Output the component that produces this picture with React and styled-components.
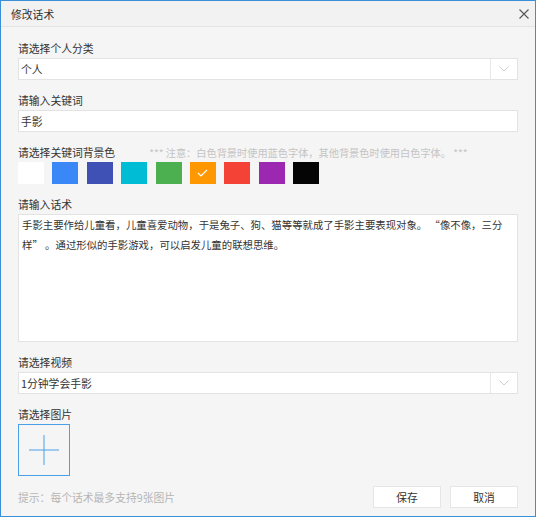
import React from 'react';
import styled, { createGlobalStyle } from 'styled-components';

const GlobalStyle = createGlobalStyle`
  html, body { margin: 0; padding: 0; }
  body {
    font-family: "Noto Sans CJK SC", "Microsoft YaHei", sans-serif;
    background: #ffffff;
  }
  *, *::before, *::after { box-sizing: border-box; }
`;

const Dialog = styled.div`
  width: 536px;
  height: 517px;
  border: 1px solid #3b8fd9;
  background: #f5f5f5;
  display: flex;
  flex-direction: column;
`;

const TitleBar = styled.div`
  height: 26px;
  flex: none;
  display: flex;
  align-items: center;
  justify-content: space-between;
  padding: 0 6px 0 10px;
  background: #f2f2f2;
  border-bottom: 1px solid #e4e4e4;
  font-size: 10.8px;
  color: #333;
`;

const CloseButton = styled.button`
  width: 10px;
  height: 10px;
  padding: 0;
  border: 0;
  background: none;
  display: flex;
  cursor: pointer;
`;

const Body = styled.div`
  flex: 1;
  display: flex;
  flex-direction: column;
  padding: 11px 17px 0;
`;

const Group = styled.div`
  margin-bottom: ${(p) => p.$gap ?? 10}px;
`;

const LabelRow = styled.div`
  height: 20px;
  display: flex;
  align-items: center;
`;

const Label = styled.span`
  font-size: 10.8px;
  line-height: 20px;
  color: #333;
`;

const Note = styled.span`
  margin-left: 34px;
  font-size: 10.2px;
  color: #c4c4c4;
`;

const SelectBox = styled.div`
  height: 22px;
  display: flex;
  background: #fff;
  border: 1px solid #e3e3e3;
`;

const SelectValue = styled.div`
  flex: 1;
  padding-left: 2px;
  font-size: 10.8px;
  line-height: 20px;
  color: #333;
`;

const SelectArrow = styled.div`
  width: 27px;
  border-left: 1px solid #e8e8e8;
  display: flex;
  align-items: center;
  justify-content: center;
`;

const TextInput = styled.input`
  display: block;
  width: 100%;
  height: 22px;
  padding: 0 2px;
  border: 1px solid #e3e3e3;
  background: #fff;
  font-family: inherit;
  font-size: 10.8px;
  color: #333;
  outline: none;
`;

const Swatches = styled.div`
  display: flex;
  gap: 8.4px;
`;

const Swatch = styled.div`
  width: 26px;
  height: 22px;
  background: ${(p) => p.$color};
  display: flex;
  align-items: center;
  justify-content: center;
`;

const TextArea = styled.textarea`
  display: block;
  width: 100%;
  height: 128px;
  padding: 0 3px;
  border: 1px solid #e3e3e3;
  background: #fff;
  font-family: inherit;
  font-size: 10.4px;
  line-height: 20px;
  color: #333;
  resize: none;
  overflow: hidden;
  outline: none;
`;

const Upload = styled.div`
  width: 52px;
  height: 52px;
  border: 1px solid #4a9fe6;
  display: flex;
  align-items: center;
  justify-content: center;
  cursor: pointer;
`;

const Footer = styled.div`
  display: flex;
  align-items: center;
  justify-content: space-between;
  height: 22px;
`;

const Hint = styled.span`
  font-size: 10.8px;
  color: #b5b5b5;
`;

const Actions = styled.div`
  display: flex;
  gap: 9px;
`;

const Button = styled.button`
  width: 68px;
  height: 22px;
  padding: 0;
  background: #fff;
  border: 1px solid #e6e6e6;
  font-family: inherit;
  font-size: 10.8px;
  color: #333;
  cursor: pointer;
`;

const Chevron = () => (
  <svg width="10" height="6" viewBox="0 0 10 6">
    <path d="M0.5 0.5 L5 5 L9.5 0.5" fill="none" stroke="#cfcfcf" strokeWidth="1" />
  </svg>
);

const Select = ({ value }) => (
  <SelectBox>
    <SelectValue>{value}</SelectValue>
    <SelectArrow>
      <Chevron />
    </SelectArrow>
  </SelectBox>
);

const colors = [
  '#ffffff',
  '#3a88f8',
  '#3f51b5',
  '#00bcd4',
  '#4caf50',
  '#ff9800',
  '#f44336',
  '#9c27b0',
  '#050505',
];

const speech =
  '手影主要作给儿童看，儿童喜爱动物，于是兔子、狗、猫等等就成了手影主要表现对象。 “像不像，三分样” 。通过形似的手影游戏，可以启发儿童的联想思维。';

export default function App() {
  const selected = 5;
  return (
    <>
      <GlobalStyle />
      <Dialog>
        <TitleBar>
          <span>修改话术</span>
          <CloseButton aria-label="关闭">
            <svg width="10" height="10" viewBox="0 0 10 10">
              <path d="M0.5 0.5 L9.5 9.5 M9.5 0.5 L0.5 9.5" stroke="#555" strokeWidth="1.1" />
            </svg>
          </CloseButton>
        </TitleBar>
        <Body>
          <Group>
            <LabelRow><Label>请选择个人分类</Label></LabelRow>
            <Select value="个人" />
          </Group>
          <Group>
            <LabelRow><Label>请输入关键词</Label></LabelRow>
            <TextInput defaultValue="手影" />
          </Group>
          <Group>
            <LabelRow>
              <Label>请选择关键词背景色</Label>
              <Note>*** 注意：白色背景时使用蓝色字体，其他背景色时使用白色字体。 ***</Note>
            </LabelRow>
            <Swatches>
              {colors.map((c, i) => (
                <Swatch key={c} $color={c}>
                  {i === selected && (
                    <svg width="11" height="8" viewBox="0 0 11 8">
                      <path d="M1 4 L4 7 L10 1" fill="none" stroke="#fff" strokeWidth="1.2" />
                    </svg>
                  )}
                </Swatch>
              ))}
            </Swatches>
          </Group>
          <Group>
            <LabelRow><Label>请输入话术</Label></LabelRow>
            <TextArea defaultValue={speech} />
          </Group>
          <Group>
            <LabelRow><Label>请选择视频</Label></LabelRow>
            <Select value="1分钟学会手影" />
          </Group>
          <Group>
            <LabelRow><Label>请选择图片</Label></LabelRow>
            <Upload>
              <svg width="30" height="30" viewBox="0 0 30 30">
                <path d="M0 15 H30 M15 0 V30" stroke="#4a9fe6" strokeWidth="1" />
              </svg>
            </Upload>
          </Group>
          <Footer>
            <Hint>提示：每个话术最多支持9张图片</Hint>
            <Actions>
              <Button>保存</Button>
              <Button>取消</Button>
            </Actions>
          </Footer>
        </Body>
      </Dialog>
    </>
  );
}
